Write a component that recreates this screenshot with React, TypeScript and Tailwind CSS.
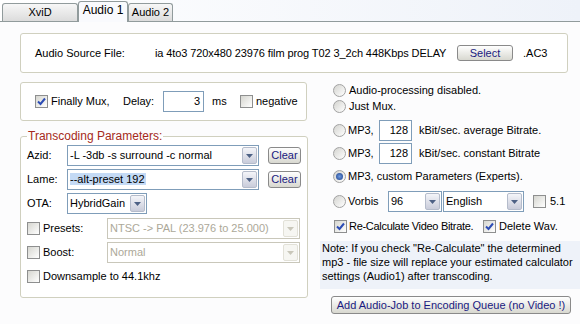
import React from 'react';

function Arrow({ disabled = false }: { disabled?: boolean }) {
    return (
        <svg width="7" height="4" viewBox="0 0 7 4">
            <polygon points="0,0 7,0 3.5,4" fill={disabled ? '#c9c7ba' : '#4d6185'} />
        </svg>
    );
}

function Combo({ value, width, disabled = false, highlight = false }: { value: string; width: string; disabled?: boolean; highlight?: boolean }) {
    return (
        <div className={`${width} h-[21px] flex items-center bg-white border ${disabled ? 'border-[#c9c7ba] text-[#aca899]' : 'border-[#7f9db9]'}`}>
            <span className="flex-1 pl-[2px] truncate">
                <span className={highlight ? 'bg-[#c4daf5] pr-[1px]' : ''}>{value}</span>
            </span>
            <div
                className={`w-[15px] h-[17px] mr-[1px] rounded-[2px] border flex items-center justify-center ${
                    disabled
                        ? 'border-[#e2e1d8] bg-[#f6f6f2]'
                        : 'border-[#b5bccb] bg-linear-to-b from-[#f4f5f9] to-[#c9ccda]'
                }`}
            >
                <Arrow disabled={disabled} />
            </div>
        </div>
    );
}

function Check({ checked = false }: { checked?: boolean }) {
    return (
        <div className="w-[13px] h-[13px] shrink-0 border border-[#8e8f8f] bg-linear-to-br from-[#d6d6d0] to-white flex items-center justify-center">
            {checked && (
                <svg width="9" height="9" viewBox="0 0 9 9">
                    <polyline points="1,4.5 3.5,7 8,1.5" fill="none" stroke="#2d4db5" strokeWidth="2" />
                </svg>
            )}
        </div>
    );
}

function Radio({ checked = false }: { checked?: boolean }) {
    return (
        <div className="w-[13px] h-[13px] shrink-0 rounded-full border border-[#a2a2a2] bg-linear-to-br from-[#d4d4d0] to-white flex items-center justify-center">
            {checked && <div className="w-[7px] h-[7px] rounded-full bg-radial from-[#6f9be0] to-[#1e3f8a]" />}
        </div>
    );
}

function XPButton({ label, className }: { label: string; className: string }) {
    return (
        <div className={`${className} rounded-[3px] border border-[#8a8a8a] bg-linear-to-b from-white to-[#d8d8d0] flex items-center justify-center text-[#1a1a80] whitespace-nowrap`}>
            {label}
        </div>
    );
}

function Field({ value, width }: { value: string; width: string }) {
    return <div className={`${width} h-[21px] border border-[#7f9db9] bg-white flex items-center justify-end pr-[3px]`}>{value}</div>;
}

export default function App() {
    return (
        <div className="w-[580px] h-[324px] overflow-hidden bg-[#fcfcfd] text-[11px] leading-[13px] text-black [font-family:'Liberation_Sans',Arial,sans-serif]">
            {/* tabs */}
            <div className="h-[22px] flex items-end pl-[2px] border-b border-[#919b9c] bg-linear-to-r from-white to-[#eef2f9]">
                <div className="w-[76px] h-[18px] rounded-t-[3px] border border-b-0 border-[#919b9c] bg-linear-to-b from-[#f7f7f7] to-[#dcdcdc] flex items-center justify-center">
                    XviD
                </div>
                <div className="relative z-10 -mb-px w-[50px] h-[21px] rounded-t-[3px] border border-b-0 border-[#919b9c] bg-[#f9fafd] flex items-center justify-center pb-[3px] text-[12px]">
                    Audio 1
                </div>
                <div className="w-[45px] h-[18px] rounded-t-[3px] border border-b-0 border-[#919b9c] bg-linear-to-b from-[#f7f7f7] to-[#dcdcdc] flex items-center justify-center">
                    Audio 2
                </div>
            </div>

            {/* source file */}
            <div className="mt-[11px] ml-[20px] w-[548px] h-[40px] border border-[#d0d0bf] rounded-[3px] flex items-center pl-[14px] bg-white">
                <span className="w-[120px]">Audio Source File:</span>
                <span className="w-[302px] whitespace-nowrap tracking-[-0.1px]">ia 4to3 720x480 23976 film prog T02 3_2ch 448Kbps DELAY</span>
                <XPButton label="Select" className="w-[56px] h-[16px]" />
                <span className="ml-[10px]">.AC3</span>
            </div>

            <div className="mt-[9px] flex">
                {/* left column */}
                <div className="ml-[20px] w-[287px]">
                    <div className="h-[39px] border border-[#d0d0bf] rounded-[3px] flex items-center pl-[14px] bg-white">
                        <Check checked />
                        <span className="ml-[3px] w-[72px]">Finally Mux,</span>
                        <span className="w-[40px]">Delay:</span>
                        <Field value="3" width="w-[41px]" />
                        <span className="ml-[8px] w-[28px]">ms</span>
                        <Check />
                        <span className="ml-[3px]">negative</span>
                    </div>

                    <fieldset className="mt-[9px] h-[168px] border border-[#d0d0bf] rounded-[3px] px-[6px] bg-white">
                        <legend className="px-[1px] text-[#a52a20] text-[12px]">Transcoding Parameters:</legend>
                        <div className="mt-[2px] flex items-center">
                            <span className="w-[40px]">Azid:</span>
                            <Combo value="-L -3db -s surround -c normal" width="w-[192px]" />
                            <XPButton label="Clear" className="ml-[9px] w-[33px] h-[17px]" />
                        </div>
                        <div className="mt-[3px] flex items-center">
                            <span className="w-[40px]">Lame:</span>
                            <Combo value="--alt-preset 192" width="w-[192px]" highlight />
                            <XPButton label="Clear" className="ml-[9px] w-[33px] h-[17px]" />
                        </div>
                        <div className="mt-[3px] flex items-center">
                            <span className="w-[40px]">OTA:</span>
                            <Combo value="HybridGain" width="w-[80px]" />
                        </div>
                        <div className="mt-[4px] flex items-center">
                            <Check />
                            <span className="ml-[3px] w-[64px]">Presets:</span>
                            <Combo value="NTSC -> PAL (23.976 to 25.000)" width="w-[193px]" disabled />
                        </div>
                        <div className="mt-[3px] flex items-center">
                            <Check />
                            <span className="ml-[3px] w-[64px]">Boost:</span>
                            <Combo value="Normal" width="w-[193px]" disabled />
                        </div>
                        <div className="mt-[3px] h-[21px] flex items-center">
                            <Check />
                            <span className="ml-[3px]">Downsample to 44.1khz</span>
                        </div>
                    </fieldset>
                </div>

                {/* right column */}
                <div className="ml-[13px] w-[260px]">
                    <div className="h-[16px] flex items-center pl-[13px]">
                        <Radio />
                        <span className="ml-[3px]">Audio-processing disabled.</span>
                    </div>
                    <div className="h-[16px] flex items-center pl-[13px]">
                        <Radio />
                        <span className="ml-[3px]">Just Mux.</span>
                    </div>
                    <div className="mt-[6px] h-[21px] flex items-center pl-[13px]">
                        <Radio />
                        <span className="ml-[2px] w-[31px]">MP3,</span>
                        <Field value="128" width="w-[33px]" />
                        <span className="ml-[7px]">kBit/sec. average Bitrate.</span>
                    </div>
                    <div className="mt-[2px] h-[21px] flex items-center pl-[13px]">
                        <Radio />
                        <span className="ml-[2px] w-[31px]">MP3,</span>
                        <Field value="128" width="w-[33px]" />
                        <span className="ml-[7px]">kBit/sec. constant Bitrate</span>
                    </div>
                    <div className="mt-[2px] h-[21px] flex items-center pl-[13px]">
                        <Radio checked />
                        <span className="ml-[2px]">MP3, custom Parameters (Experts).</span>
                    </div>
                    <div className="mt-[4px] h-[21px] flex items-center pl-[13px]">
                        <Radio />
                        <span className="ml-[2px] w-[40px]">Vorbis</span>
                        <Combo value="96" width="w-[54px]" />
                        <Combo value="English" width="w-[81px] ml-[1px]" />
                        <div className="ml-[9px]">
                            <Check />
                        </div>
                        <span className="ml-[4px]">5.1</span>
                    </div>
                    <div className="mt-[6px] h-[16px] flex items-center pl-[14px]">
                        <Check checked />
                        <span className="ml-[2px] w-[134px] whitespace-nowrap tracking-[-0.3px]">Re-Calculate Video Bitrate.</span>
                        <Check checked />
                        <span className="ml-[3px]">Delete Wav.</span>
                    </div>
                    <div className="mt-[7px] h-[48px] bg-[#eef2f9] pl-[2px] leading-[14px]">
                        <div>Note: If you check "Re-Calculate" the determined</div>
                        <div>mp3 - file size will replace your estimated calculator</div>
                        <div>settings (Audio1) after transcoding.</div>
                    </div>
                    <XPButton label="Add Audio-Job to Encoding Queue (no Video !)" className="mt-[7px] ml-[11px] w-[240px] h-[18px]" />
                </div>
            </div>
        </div>
    );
}
